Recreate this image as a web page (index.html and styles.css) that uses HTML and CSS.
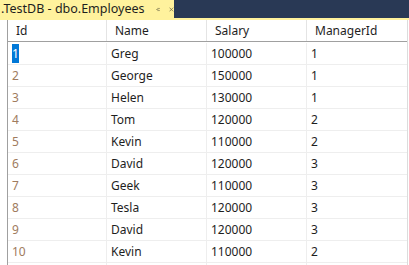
FILE: index.html
```html
<!DOCTYPE html>
<html>
<head>
<meta charset="utf-8">
<link rel="stylesheet" href="styles.css">
</head>
<body>
<div class="tabbar">
  <div class="tab">
    <span class="tab-title">.TestDB - dbo.Employees</span>
    <svg class="pin" width="9" height="9" viewBox="0 0 9 9"><path d="M0 4.5H3M3.5 1.5V7.5M3.5 2.5H8.5V6.5H3.5" fill="none" stroke="#6e6a4a" stroke-width="1"/></svg>
    <svg class="close" width="9" height="9" viewBox="0 0 9 9"><path d="M1 1L8 8M8 1L1 8" stroke="#6e6a4a" stroke-width="1.4"/></svg>
  </div>
</div>
<div class="grid">
  <div class="row head">
    <div class="cell">Id</div><div class="cell">Name</div><div class="cell">Salary</div><div class="cell">ManagerId</div>
  </div>
  <div class="rows">
    <div class="row"><div class="cell id"><span class="sel">1</span></div><div class="cell">Greg</div><div class="cell">100000</div><div class="cell">1</div></div>
    <div class="row"><div class="cell id">2</div><div class="cell">George</div><div class="cell">150000</div><div class="cell">1</div></div>
    <div class="row"><div class="cell id">3</div><div class="cell">Helen</div><div class="cell">130000</div><div class="cell">1</div></div>
    <div class="row"><div class="cell id">4</div><div class="cell">Tom</div><div class="cell">120000</div><div class="cell">2</div></div>
    <div class="row"><div class="cell id">5</div><div class="cell">Kevin</div><div class="cell">110000</div><div class="cell">2</div></div>
    <div class="row"><div class="cell id">6</div><div class="cell">David</div><div class="cell">120000</div><div class="cell">3</div></div>
    <div class="row"><div class="cell id">7</div><div class="cell">Geek</div><div class="cell">110000</div><div class="cell">3</div></div>
    <div class="row"><div class="cell id">8</div><div class="cell">Tesla</div><div class="cell">120000</div><div class="cell">3</div></div>
    <div class="row"><div class="cell id">9</div><div class="cell">David</div><div class="cell">120000</div><div class="cell">3</div></div>
    <div class="row"><div class="cell id">10</div><div class="cell">Kevin</div><div class="cell">110000</div><div class="cell">2</div></div>
    <div class="row"><div class="cell id"></div><div class="cell"></div><div class="cell"></div><div class="cell"></div></div>
  </div>
</div>
</body>
</html>
```
FILE: styles.css
```css
html, body {
  margin: 0;
  padding: 0;
  background: #ffffff;
  overflow: hidden;
  width: 409px;
  height: 265px;
  font-family: "Noto Sans", "Open Sans", sans-serif;
  font-size: 12px;
  color: #1e1e1e;
}
.tabbar {
  height: 18px;
  background: #293955;
  border-bottom: 2px solid #fff29d;
  display: flex;
}
.tab {
  width: 174px;
  height: 18px;
  background: #fff29d;
  display: flex;
  align-items: center;
  padding-left: 1px;
  box-sizing: border-box;
}
.tab-title {
  color: #1e1e1e;
  font-size: 12.5px;
  line-height: 18px;
  white-space: nowrap;
}
.pin {
  margin-left: 11px;
}
.close {
  margin-left: 9px;
}
.grid {
  margin-left: 7px;
  width: 401px;
  border-left: 1px solid #a0a0a0;
  border-right: 1px solid #dcdcdc;
  height: 245px;
  box-sizing: border-box;
  overflow: hidden;
}
.row {
  display: grid;
  grid-template-columns: 99px 100px 100px 100px;
  height: 22px;
  border-bottom: 1px solid #eeeeee;
  box-sizing: border-box;
}
.rows {
  padding-top: 1px;
}
.row.head {
  height: 22px;
  border-bottom: 1px solid #a0a0a0;
}
.cell {
  border-right: 1px solid #eeeeee;
  padding-left: 4px;
  line-height: 21px;
  white-space: nowrap;
  overflow: hidden;
}
.row .cell:last-child {
  border-right: none;
}
.head .cell {
  padding-left: 8px;
  border-right-color: #e4e4e4;
}
.cell.id {
  color: #a07b5e;
}
.sel {
  background: #0078d7;
  color: #ffffff;
  padding: 1px 0;
}
```
